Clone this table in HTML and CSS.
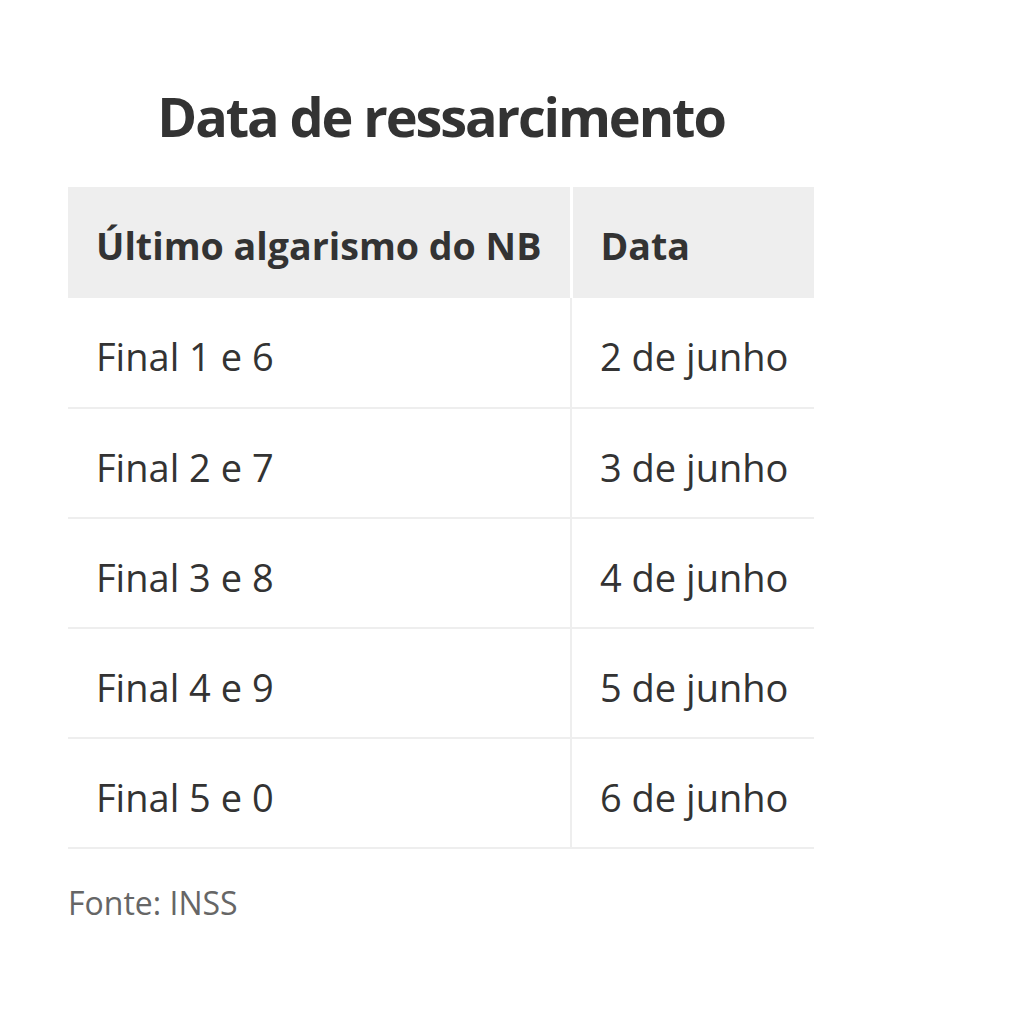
FILE: index.html
```html
<!DOCTYPE html>
<html lang="pt">
<head>
<meta charset="utf-8">
<link rel="stylesheet" href="styles.css">
</head>
<body>
<div class="wrap">
  <h1 class="title">Data de ressarcimento</h1>
  <table class="tbl">
    <thead>
      <tr><th class="c1">Último algarismo do NB</th><th class="c2">Data</th></tr>
    </thead>
    <tbody>
      <tr><td class="c1">Final 1 e 6</td><td class="c2">2 de junho</td></tr>
      <tr><td class="c1">Final 2 e 7</td><td class="c2">3 de junho</td></tr>
      <tr><td class="c1">Final 3 e 8</td><td class="c2">4 de junho</td></tr>
      <tr><td class="c1">Final 4 e 9</td><td class="c2">5 de junho</td></tr>
      <tr><td class="c1">Final 5 e 0</td><td class="c2">6 de junho</td></tr>
    </tbody>
  </table>
  <p class="source">Fonte: INSS</p>
</div>
</body>
</html>
```
FILE: styles.css
```css
html, body { margin: 0; padding: 0; background: #fff; }
body { font-family: "Open Sans", "Noto Sans", sans-serif; color: #333; }
.wrap { width: 746px; margin-left: 68px; padding-top: 82px; }
.title { margin: 0; text-align: center; font-size: 54px; font-weight: 700; line-height: 68px; color: #333; letter-spacing: -2.1px; }
.tbl { width: 746px; border-collapse: collapse; margin-top: 37px; }
.tbl th, .tbl td { text-align: left; padding: 0 0 0 28px; height: 110px; box-sizing: border-box; }
.tbl th { background: #eeeeee; font-weight: 700; font-size: 37.6px; color: #333; height: 111px; padding-top: 5px; }
.tbl td { font-size: 38px; font-weight: 400; color: #333; border-bottom: 2px solid #eeeeee; padding-top: 7px; }
.tbl .c1 { width: 503px; border-right: 2px solid #eeeeee; }
.tbl th.c1 { border-right: 3px solid #fff; }
.source { margin: 32px 0 0; font-size: 32px; color: #666; }
```
